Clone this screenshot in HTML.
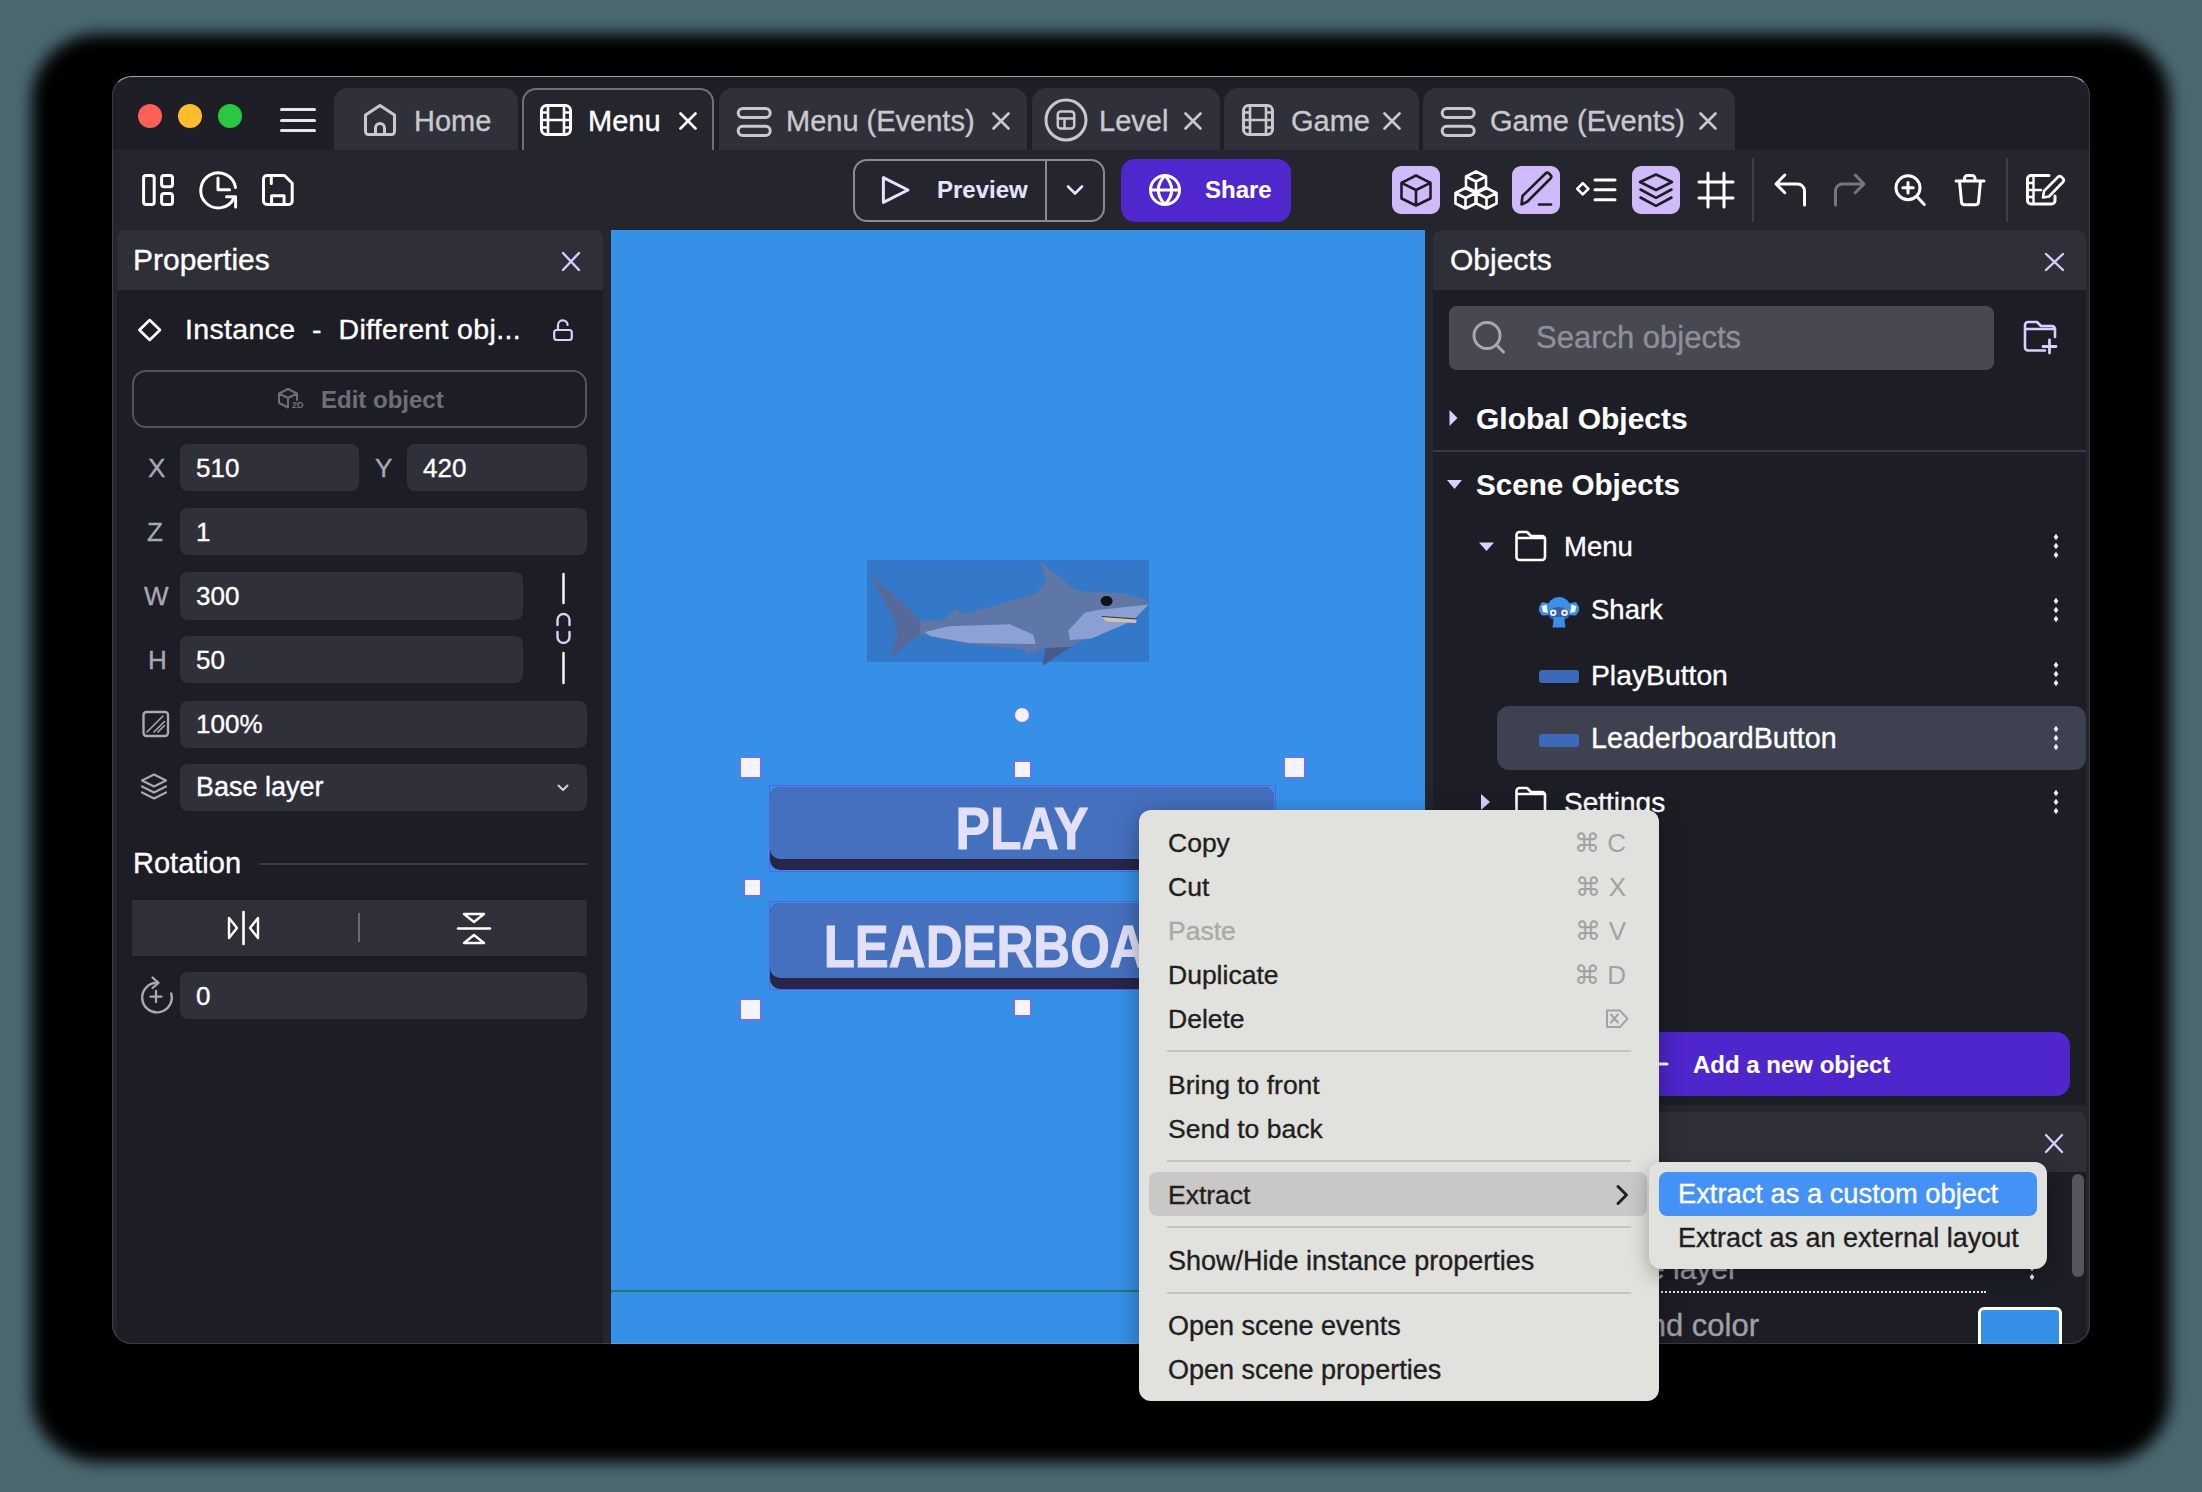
<!DOCTYPE html>
<html><head><meta charset="utf-8"><style>
html,body{margin:0;padding:0;width:2202px;height:1492px;overflow:hidden;background:#4b6870;}
body{position:relative;font-family:"Liberation Sans",sans-serif;}
.a{position:absolute;}
.t{position:absolute;white-space:pre;line-height:1;-webkit-text-stroke:0.35px currentColor;}
#win{position:absolute;left:112px;top:76px;width:1978px;height:1268px;border-radius:20px;overflow:hidden;background:#1e1e27;}
#shadow{position:absolute;left:112px;top:76px;width:1978px;height:1268px;border-radius:20px;box-shadow:0 38px 16px 80px #000;}
#inner{position:absolute;left:-112px;top:-76px;width:2202px;height:1492px;}
#border{position:absolute;left:112px;top:76px;width:1978px;height:1268px;border-radius:20px;box-sizing:border-box;border:1px solid rgba(255,255,255,0.12);border-top-color:rgba(255,255,255,0.6);pointer-events:none;}
</style></head><body>
<div id="shadow"></div>
<div id="win"><div id="inner">
<div class="a" style="left:112px;top:76px;width:1978px;height:74px;background:#1e1e27;border-radius:0px;"></div><div class="a" style="left:138px;top:104px;width:24px;height:24px;background:#fe5f57;border-radius:12px;"></div><div class="a" style="left:178px;top:104px;width:24px;height:24px;background:#febc2e;border-radius:12px;"></div><div class="a" style="left:218px;top:104px;width:24px;height:24px;background:#28c840;border-radius:12px;"></div><div class="a" style="left:280px;top:108px;width:36px;height:3px;background:#e6e6ea;border-radius:1.5px;"></div><div class="a" style="left:280px;top:119px;width:36px;height:3px;background:#e6e6ea;border-radius:1.5px;"></div><div class="a" style="left:280px;top:129px;width:36px;height:3px;background:#e6e6ea;border-radius:1.5px;"></div><div class="a" style="left:334px;top:88px;width:184px;height:62px;background:#30303a;border-radius:14px 14px 0 0;"></div><div class="t" style="left:414px;top:106.5px;font-size:29px;color:#c9c9cc;">Home</div><svg class="a" style="left:360px;top:100px;width:40px;height:40px;" viewBox="360 100 40 40" fill="none"><path d="M365.5 115 L380 105.5 L394.5 115 V131.5 a3 3 0 0 1 -3 3 H368.5 a3 3 0 0 1 -3 -3 Z" stroke="#c9c9cc" stroke-width="3" stroke-linecap="round" stroke-linejoin="round" fill="none" /><path d="M375.5 134.5 V128 a4.5 4.5 0 0 1 9 0 V134.5" stroke="#c9c9cc" stroke-width="3" stroke-linecap="round" stroke-linejoin="round" fill="none" /></svg><div class="a" style="left:522px;top:88px;width:192px;height:64px;background:#25252e;border-radius:14px 14px 0 0;box-sizing:border-box;border:2px solid #6f6f78;border-bottom:none;"></div><div class="t" style="left:588px;top:106.5px;font-size:29px;color:#ffffff;">Menu</div><svg class="a" style="left:679px;top:112px;width:18px;height:18px;" viewBox="0 0 18 18" fill="none"><path d="M1.5 1.5L16.5 16.5M16.5 1.5L1.5 16.5" stroke="#ffffff" stroke-width="2.6" stroke-linecap="round"/></svg><svg class="a" style="left:536px;top:100px;width:40px;height:40px;" viewBox="536 100 40 40" fill="none"><rect x="541.5" y="105.5" width="29" height="29" rx="5" stroke="#ffffff" stroke-width="3" stroke-linecap="round" stroke-linejoin="round" fill="none" /><path d="M548 106V134M564 106V134M542 120H570M542 112.5H548M542 127.5H548M564 112.5H570M564 127.5H570" stroke="#ffffff" stroke-width="2.6" stroke-linecap="round" stroke-linejoin="round" fill="none" /></svg><div class="a" style="left:719px;top:88px;width:308px;height:62px;background:#30303a;border-radius:14px 14px 0 0;"></div><div class="t" style="left:786px;top:106.5px;font-size:29px;color:#c9c9cc;">Menu (Events)</div><svg class="a" style="left:992px;top:112px;width:18px;height:18px;" viewBox="0 0 18 18" fill="none"><path d="M1.5 1.5L16.5 16.5M16.5 1.5L1.5 16.5" stroke="#c9c9cc" stroke-width="2.6" stroke-linecap="round"/></svg><svg class="a" style="left:732px;top:100px;width:44px;height:42px;" viewBox="732 100 44 42" fill="none"><rect x="738.2" y="108.4" width="32" height="9.2" rx="4.6" stroke="#c9c9cc" stroke-width="3" stroke-linecap="round" stroke-linejoin="round" fill="none" /><rect x="738.2" y="126.3" width="32" height="9.1" rx="4.5" stroke="#c9c9cc" stroke-width="3" stroke-linecap="round" stroke-linejoin="round" fill="none" /></svg><div class="a" style="left:1032px;top:88px;width:188px;height:62px;background:#30303a;border-radius:14px 14px 0 0;"></div><div class="t" style="left:1099px;top:106.5px;font-size:29px;color:#c9c9cc;">Level</div><svg class="a" style="left:1184px;top:112px;width:18px;height:18px;" viewBox="0 0 18 18" fill="none"><path d="M1.5 1.5L16.5 16.5M16.5 1.5L1.5 16.5" stroke="#c9c9cc" stroke-width="2.6" stroke-linecap="round"/></svg><svg class="a" style="left:1040px;top:95px;width:52px;height:50px;" viewBox="1040 95 52 50" fill="none"><circle cx="1066" cy="120" r="20" stroke="#c9c9cc" stroke-width="3" stroke-linecap="round" stroke-linejoin="round" fill="none" /><rect x="1057.8" y="111.6" width="16.4" height="16.9" rx="3" stroke="#c9c9cc" stroke-width="2.5" stroke-linecap="round" stroke-linejoin="round" fill="none" /><path d="M1058 118.5H1074M1064.5 118.5V128.5" stroke="#c9c9cc" stroke-width="2.5" stroke-linecap="round" stroke-linejoin="round" fill="none" /></svg><div class="a" style="left:1224px;top:88px;width:195px;height:62px;background:#30303a;border-radius:14px 14px 0 0;"></div><div class="t" style="left:1291px;top:106.5px;font-size:29px;color:#c9c9cc;">Game</div><svg class="a" style="left:1383px;top:112px;width:18px;height:18px;" viewBox="0 0 18 18" fill="none"><path d="M1.5 1.5L16.5 16.5M16.5 1.5L1.5 16.5" stroke="#c9c9cc" stroke-width="2.6" stroke-linecap="round"/></svg><svg class="a" style="left:1238px;top:100px;width:40px;height:40px;" viewBox="1238 100 40 40" fill="none"><rect x="1243.5" y="105.5" width="29" height="29" rx="5" stroke="#c9c9cc" stroke-width="3" stroke-linecap="round" stroke-linejoin="round" fill="none" /><path d="M1250 106V134M1266 106V134M1244 120H1272M1244 112.5H1250M1244 127.5H1250M1266 112.5H1272M1266 127.5H1272" stroke="#c9c9cc" stroke-width="2.6" stroke-linecap="round" stroke-linejoin="round" fill="none" /></svg><div class="a" style="left:1423px;top:88px;width:312px;height:62px;background:#30303a;border-radius:14px 14px 0 0;"></div><div class="t" style="left:1490px;top:106.5px;font-size:29px;color:#c9c9cc;">Game (Events)</div><svg class="a" style="left:1699px;top:112px;width:18px;height:18px;" viewBox="0 0 18 18" fill="none"><path d="M1.5 1.5L16.5 16.5M16.5 1.5L1.5 16.5" stroke="#c9c9cc" stroke-width="2.6" stroke-linecap="round"/></svg><svg class="a" style="left:1436px;top:100px;width:44px;height:42px;" viewBox="1436 100 44 42" fill="none"><rect x="1442.2" y="108.4" width="32" height="9.2" rx="4.6" stroke="#c9c9cc" stroke-width="3" stroke-linecap="round" stroke-linejoin="round" fill="none" /><rect x="1442.2" y="126.3" width="32" height="9.1" rx="4.5" stroke="#c9c9cc" stroke-width="3" stroke-linecap="round" stroke-linejoin="round" fill="none" /></svg><div class="a" style="left:112px;top:150px;width:1978px;height:1194px;background:#25252e;border-radius:0px;"></div><svg class="a" style="left:138px;top:170px;width:40px;height:40px;" viewBox="138 170 40 40" fill="none"><rect x="143.6" y="175.4" width="10.6" height="29" rx="2.5" stroke="#ffffff" stroke-width="3" stroke-linecap="round" stroke-linejoin="round" fill="none" /><rect x="161.6" y="175.4" width="10.9" height="11.3" rx="2.5" stroke="#ffffff" stroke-width="3" stroke-linecap="round" stroke-linejoin="round" fill="none" /><rect x="161.6" y="193.5" width="10.9" height="10.9" rx="2.5" stroke="#ffffff" stroke-width="3" stroke-linecap="round" stroke-linejoin="round" fill="none" /></svg><svg class="a" style="left:195px;top:166px;width:47px;height:46px;" viewBox="195 166 47 46" fill="none"><path d="M235.5 187.5 A17.5 17.5 0 1 0 234 198" stroke="#ffffff" stroke-width="3" stroke-linecap="round" stroke-linejoin="round" fill="none" /><path d="M226.5 196.7H235.6V207M218 178V189.7H229.6" stroke="#ffffff" stroke-width="3" stroke-linecap="round" stroke-linejoin="round" fill="none" /></svg><svg class="a" style="left:258px;top:170px;width:40px;height:40px;" viewBox="258 170 40 40" fill="none"><path d="M263.5 179 a3.5 3.5 0 0 1 3.5 -3.5 H284.5 L292.2 183.2 V201 a3.5 3.5 0 0 1 -3.5 3.5 H267 a3.5 3.5 0 0 1 -3.5 -3.5 Z" stroke="#ffffff" stroke-width="3" stroke-linecap="round" stroke-linejoin="round" fill="none" /><path d="M271.3 176V183.5M271.6 204V195.7H284.1V204" stroke="#ffffff" stroke-width="3" stroke-linecap="round" stroke-linejoin="round" fill="none" /></svg><div class="a" style="left:853px;top:159px;width:252px;height:63px;background:transparent;border-radius:14px;box-sizing:border-box;border:2px solid #8a8a92;"></div><div class="a" style="left:1045px;top:159px;width:2px;height:63px;background:#8a8a92;border-radius:0px;"></div><svg class="a" style="left:878px;top:172px;width:36px;height:36px;" viewBox="878 172 36 36" fill="none"><path d="M883.4 177.6 L908 190 L883.4 202.4 Z" stroke="#e6e2ff" stroke-width="3" stroke-linecap="round" stroke-linejoin="round" fill="none" /></svg><div class="t" style="left:937px;top:178.1px;font-size:24px;color:#e6e2ff;font-weight:700;-webkit-text-stroke:0.1px currentColor;">Preview</div><svg class="a" style="left:1063px;top:182px;width:25px;height:18px;" viewBox="1063 182 25 18" fill="none"><path d="M1068 186.5 L1075 193.5 L1082 186.5" stroke="#e6e2ff" stroke-width="2.6" stroke-linecap="round" stroke-linejoin="round" fill="none" /></svg><div class="a" style="left:1121px;top:159px;width:170px;height:63px;background:#4f27cd;border-radius:14px;"></div><svg class="a" style="left:1145px;top:170px;width:40px;height:40px;" viewBox="1145 170 40 40" fill="none"><circle cx="1165" cy="190" r="14.5" stroke="#ffffff" stroke-width="3" stroke-linecap="round" stroke-linejoin="round" fill="none" /><path d="M1151 190H1179M1165 175.5 Q1151.5 190 1165 204.5 M1165 175.5 Q1178.5 190 1165 204.5" stroke="#ffffff" stroke-width="3" stroke-linecap="round" stroke-linejoin="round" fill="none" /></svg><div class="t" style="left:1205px;top:178.1px;font-size:24px;color:#ffffff;font-weight:700;-webkit-text-stroke:0.1px currentColor;">Share</div><div class="a" style="left:1392px;top:166px;width:48px;height:48px;background:#d0bafc;border-radius:9px;"></div><div class="a" style="left:1512px;top:166px;width:48px;height:48px;background:#d0bafc;border-radius:9px;"></div><div class="a" style="left:1632px;top:166px;width:48px;height:48px;background:#d0bafc;border-radius:9px;"></div><svg class="a" style="left:1396px;top:170px;width:40px;height:40px;" viewBox="1396 170 40 40" fill="none"><path d="M1416 175.5 L1430.5 182.8 V198.5 L1416 205.5 L1401.5 198.5 V182.8 Z M1401.5 182.8 L1416 190 L1430.5 182.8 M1416 190 V205.5" stroke="#1d1d25" stroke-width="2.6" stroke-linecap="round" stroke-linejoin="round" fill="none" /></svg><svg class="a" style="left:1448px;top:164px;width:56px;height:50px;" viewBox="1448 164 56 50" fill="none"><path d="M1476 171.5 L1486 176.5 V187.0 L1476 192.0 L1466 187.0 V176.5 Z M1466 176.5 L1476 181.5 L1486 176.5 M1476 181.5 V192.0 M1465.5 188 L1475.5 193.0 V203.5 L1465.5 208.5 L1455.5 203.5 V193.0 Z M1455.5 193.0 L1465.5 198.0 L1475.5 193.0 M1465.5 198.0 V208.5 M1486.5 188 L1496.5 193.0 V203.5 L1486.5 208.5 L1476.5 203.5 V193.0 Z M1476.5 193.0 L1486.5 198.0 L1496.5 193.0 M1486.5 198.0 V208.5" stroke="#ffffff" stroke-width="2.6" stroke-linecap="round" stroke-linejoin="round" fill="none" /></svg><svg class="a" style="left:1514px;top:168px;width:44px;height:44px;" viewBox="1514 168 44 44" fill="none"><path d="M1521.5 204.5 L1522.5 196 L1545.5 173.5 a2.5 2.5 0 0 1 3.5 0 L1550.5 175 a2.5 2.5 0 0 1 0 3.5 L1527.5 201.5 Z" stroke="#1d1d25" stroke-width="2.6" stroke-linecap="round" stroke-linejoin="round" fill="none" /><path d="M1539 204.5H1551" stroke="#1d1d25" stroke-width="2.6" stroke-linecap="round" stroke-linejoin="round" fill="none" /></svg><svg class="a" style="left:1572px;top:170px;width:48px;height:38px;" viewBox="1572 170 48 38" fill="none"><path d="M1582.8 183.2 L1588.4 188.8 L1582.8 194.4 L1577.2 188.8 Z" stroke="#ffffff" stroke-width="2.6" stroke-linecap="round" stroke-linejoin="round" fill="none" /><path d="M1595 180H1615M1595 189.8H1615M1595 199.8H1615" stroke="#ffffff" stroke-width="3" stroke-linecap="round" stroke-linejoin="round" fill="none" /></svg><svg class="a" style="left:1634px;top:168px;width:44px;height:44px;" viewBox="1634 168 44 44" fill="none"><path d="M1656 174.5 L1672 182 L1656 190 L1640 182 Z" stroke="#1d1d25" stroke-width="2.6" stroke-linecap="round" stroke-linejoin="round" fill="none" /><path d="M1640.5 189.5 L1656 197.8 L1671.5 189.5 M1640.5 197.5 L1656 205.8 L1671.5 197.5" stroke="#1d1d25" stroke-width="2.6" stroke-linecap="round" stroke-linejoin="round" fill="none" /></svg><svg class="a" style="left:1694px;top:168px;width:44px;height:44px;" viewBox="1694 168 44 44" fill="none"><path d="M1708 173V207M1724 173V207M1699 182H1733M1699 198H1733" stroke="#ffffff" stroke-width="3" stroke-linecap="round" stroke-linejoin="round" fill="none" /></svg><div class="a" style="left:1752px;top:158px;width:2px;height:64px;background:#3b3e4b;border-radius:0px;"></div><div class="a" style="left:2006px;top:158px;width:2px;height:64px;background:#3b3e4b;border-radius:0px;"></div><svg class="a" style="left:1770px;top:170px;width:40px;height:40px;" viewBox="1770 170 40 40" fill="none"><path d="M1804.5 205 V191 a7 7 0 0 0 -7 -7 H1776 M1784.8 175 L1776 184 L1784.8 192.7" stroke="#ffffff" stroke-width="3" stroke-linecap="round" stroke-linejoin="round" fill="none" /></svg><svg class="a" style="left:1830px;top:170px;width:40px;height:40px;" viewBox="1830 170 40 40" fill="none"><path d="M1835.5 205 V191 a7 7 0 0 1 7 -7 H1864 M1855.2 175 L1864 184 L1855.2 192.7" stroke="#75757d" stroke-width="3" stroke-linecap="round" stroke-linejoin="round" fill="none" /></svg><svg class="a" style="left:1890px;top:170px;width:40px;height:40px;" viewBox="1890 170 40 40" fill="none"><circle cx="1908" cy="187.7" r="12" stroke="#ffffff" stroke-width="3" stroke-linecap="round" stroke-linejoin="round" fill="none" /><path d="M1917 196.8 L1924.3 204.5 M1908 182.5V193 M1902.8 187.7H1913.2" stroke="#ffffff" stroke-width="3" stroke-linecap="round" stroke-linejoin="round" fill="none" /></svg><svg class="a" style="left:1950px;top:170px;width:40px;height:40px;" viewBox="1950 170 40 40" fill="none"><path d="M1956 181H1984 M1964.5 181 V178.5 a3 3 0 0 1 3 -3 H1972 a3 3 0 0 1 3 3 V181 M1959.5 181 L1961.5 202 a3 3 0 0 0 3 2.7 H1975.5 a3 3 0 0 0 3 -2.7 L1980.5 181" stroke="#ffffff" stroke-width="3" stroke-linecap="round" stroke-linejoin="round" fill="none" /></svg><svg class="a" style="left:2022px;top:170px;width:48px;height:40px;" viewBox="2022 170 48 40" fill="none"><path d="M2049 175.5 H2031 a3.5 3.5 0 0 0 -3.5 3.5 V200.5 a3.5 3.5 0 0 0 3.5 3.5 H2051.5 a3.5 3.5 0 0 0 3.5 -3.5 V196" stroke="#ffffff" stroke-width="3" stroke-linecap="round" stroke-linejoin="round" fill="none" /><path d="M2033.5 176V204 M2028 183H2033.5 M2028 190H2033.5 M2028 197H2033.5 M2033.5 190H2041" stroke="#ffffff" stroke-width="2.4" stroke-linecap="round" stroke-linejoin="round" fill="none" /><path d="M2043 197.5 L2044 191 L2058 177 a2.5 2.5 0 0 1 3.5 0 L2063 178.5 a2.5 2.5 0 0 1 0 3.5 L2049 196.5 Z" stroke="#ffffff" stroke-width="2.6" stroke-linecap="round" stroke-linejoin="round" fill="none" /></svg><div class="a" style="left:117px;top:230px;width:486px;height:1114px;background:#1d1d26;border-radius:8px 8px 0 0;"></div><div class="a" style="left:117px;top:230px;width:486px;height:60px;background:#2f2f38;border-radius:8px 8px 0 0;"></div><div class="t" style="left:133px;top:245.2px;font-size:30px;color:#ffffff;">Properties</div><svg class="a" style="left:559px;top:249px;width:24px;height:25px;" viewBox="559 249 24 25" fill="none"><path d="M563 253L579 270M579 253L563 270" stroke="#d6ccff" stroke-width="2.4" stroke-linecap="round" stroke-linejoin="round" fill="none" /></svg><div class="t" style="left:185px;top:314.9px;font-size:28.5px;color:#ffffff;letter-spacing:0.35px;">Instance  -  Different obj...</div><div class="a" style="left:132px;top:370px;width:455px;height:58px;background:transparent;border-radius:14px;box-sizing:border-box;border:2px solid #4f5363;"></div><div class="t" style="left:321px;top:387.7px;font-size:24px;color:#6e6e7a;font-weight:700;-webkit-text-stroke:0.1px currentColor;">Edit object</div><div class="t" style="left:148px;top:455.0px;font-size:26px;color:#a9a9b1;">X</div><div class="a" style="left:180px;top:444px;width:179px;height:47px;background:#30303a;border-radius:8px;"></div><div class="t" style="left:196px;top:455.0px;font-size:26px;color:#ffffff;">510</div><div class="t" style="left:375px;top:455.0px;font-size:26px;color:#a9a9b1;">Y</div><div class="a" style="left:407px;top:444px;width:180px;height:47px;background:#30303a;border-radius:8px;"></div><div class="t" style="left:423px;top:455.0px;font-size:26px;color:#ffffff;">420</div><div class="t" style="left:147px;top:519.0px;font-size:26px;color:#a9a9b1;">Z</div><div class="a" style="left:180px;top:508px;width:407px;height:47px;background:#30303a;border-radius:8px;"></div><div class="t" style="left:196px;top:519.0px;font-size:26px;color:#ffffff;">1</div><div class="t" style="left:144px;top:583.0px;font-size:26px;color:#a9a9b1;">W</div><div class="a" style="left:180px;top:572px;width:343px;height:48px;background:#30303a;border-radius:8px;"></div><div class="t" style="left:196px;top:583.0px;font-size:26px;color:#ffffff;">300</div><div class="t" style="left:148px;top:647.0px;font-size:26px;color:#a9a9b1;">H</div><div class="a" style="left:180px;top:636px;width:343px;height:47px;background:#30303a;border-radius:8px;"></div><div class="t" style="left:196px;top:647.0px;font-size:26px;color:#ffffff;">50</div><div class="a" style="left:180px;top:701px;width:407px;height:47px;background:#30303a;border-radius:8px;"></div><div class="t" style="left:196px;top:711.0px;font-size:26px;color:#ffffff;">100%</div><div class="a" style="left:180px;top:764px;width:407px;height:47px;background:#30303a;border-radius:8px;"></div><div class="t" style="left:196px;top:774.1px;font-size:27px;color:#ffffff;">Base layer</div><div class="t" style="left:133px;top:848.9px;font-size:29px;color:#ffffff;">Rotation</div><div class="a" style="left:259px;top:863px;width:328px;height:2px;background:#3b3b45;border-radius:0px;"></div><div class="a" style="left:132px;top:900px;width:455px;height:56px;background:#2f2f38;border-radius:2px;"></div><div class="a" style="left:358px;top:913px;width:2px;height:29px;background:#6a6a72;border-radius:0px;"></div><div class="a" style="left:180px;top:972px;width:407px;height:47px;background:#30303a;border-radius:8px;"></div><div class="t" style="left:196px;top:983.0px;font-size:26px;color:#ffffff;">0</div><svg class="a" style="left:134px;top:314px;width:32px;height:32px;" viewBox="134 314 32 32" fill="none"><path d="M149.7 320 L160 330 L149.7 340 L139.4 330 Z" stroke="#ffffff" stroke-width="2.6" stroke-linecap="round" stroke-linejoin="round" fill="none" /></svg><svg class="a" style="left:548px;top:314px;width:30px;height:32px;" viewBox="548 314 30 32" fill="none"><rect x="554.2" y="330" width="17.6" height="10" rx="2.5" stroke="#d8d0ff" stroke-width="2.2" stroke-linecap="round" stroke-linejoin="round" fill="none" /><path d="M558 330 V325.5 a4.8 4.8 0 0 1 9.6 -0.5" stroke="#d8d0ff" stroke-width="2.2" stroke-linecap="round" stroke-linejoin="round" fill="none" /></svg><svg class="a" style="left:274px;top:384px;width:32px;height:30px;" viewBox="274 384 32 30" fill="none"><path d="M288 389 L297 393.5 V400 M279 393.5 V403 L288 407.5 M279 393.5 L288 389 M279 393.5 L288 398 L297 393.5 M288 398 V407.5" stroke="#6e6e7a" stroke-width="2" stroke-linecap="round" stroke-linejoin="round" fill="none" /></svg><div class="t" style="left:292px;top:401.4px;font-size:9px;color:#6e6e7a;font-weight:700;-webkit-text-stroke:0.1px currentColor;">2D</div><svg class="a" style="left:138px;top:706px;width:36px;height:36px;" viewBox="138 706 36 36" fill="none"><rect x="143.5" y="712" width="24.5" height="24" rx="3" stroke="#a9a9b1" stroke-width="2.4" stroke-linecap="round" stroke-linejoin="round" fill="none" /><path d="M147 732 L163 716 M154 732 L164.5 721.5 M158 732 L164.5 725.5" stroke="#a9a9b1" stroke-width="1.6" stroke-linecap="round" stroke-linejoin="round" fill="none" /></svg><svg class="a" style="left:136px;top:770px;width:36px;height:36px;" viewBox="136 770 36 36" fill="none"><path d="M154 774.5 L166 780.5 L154 786.5 L142 780.5 Z" stroke="#a9a9b1" stroke-width="2.2" stroke-linecap="round" stroke-linejoin="round" fill="none" /><path d="M142 786.5 L154 792.5 L166 786.5 M142 792.5 L154 798.5 L166 792.5" stroke="#a9a9b1" stroke-width="2.2" stroke-linecap="round" stroke-linejoin="round" fill="none" /></svg><svg class="a" style="left:554px;top:780px;width:18px;height:16px;" viewBox="554 780 18 16" fill="none"><path d="M558.5 785.5 L563 790 L567.5 785.5" stroke="#d0d0d8" stroke-width="2" stroke-linecap="round" stroke-linejoin="round" fill="none" /></svg><svg class="a" style="left:550px;top:568px;width:28px;height:122px;" viewBox="550 568 28 122" fill="none"><path d="M563.5 574V603 M563.5 653V683" stroke="#ffffff" stroke-width="2.4" stroke-linecap="round" stroke-linejoin="round" fill="none" /><path d="M557.5 625 V620 a6 6 0 0 1 12 0 V625 M557.5 632 V637 a6 6 0 0 0 12 0 V632" stroke="#d8d0ff" stroke-width="2.4" stroke-linecap="round" stroke-linejoin="round" fill="none" /></svg><svg class="a" style="left:222px;top:906px;width:44px;height:44px;" viewBox="222 906 44 44" fill="none"><path d="M243.5 912 V944" stroke="#ffffff" stroke-width="2.6" stroke-linecap="round" stroke-linejoin="round" fill="none" /><path d="M229 918 L237 928 L229 938 Z M258 918 L250 928 L258 938 Z" stroke="#ffffff" stroke-width="2.4" stroke-linecap="round" stroke-linejoin="round" fill="none" /></svg><svg class="a" style="left:452px;top:906px;width:44px;height:44px;" viewBox="452 906 44 44" fill="none"><path d="M458 928.5 H490" stroke="#ffffff" stroke-width="2.6" stroke-linecap="round" stroke-linejoin="round" fill="none" /><path d="M464 914 L484 914 L474 922 Z M464 943 L484 943 L474 935 Z" stroke="#ffffff" stroke-width="2.4" stroke-linecap="round" stroke-linejoin="round" fill="none" /></svg><svg class="a" style="left:134px;top:970px;width:46px;height:50px;" viewBox="134 970 46 50" fill="none"><path d="M171.2 993.5 A14.8 14.8 0 1 1 157.5 982.8" stroke="#a9a9b1" stroke-width="2.4" stroke-linecap="round" stroke-linejoin="round" fill="none" /><path d="M152.5 977.5 L158.5 982.8 L152.5 988 M156 991 V1002 M150.5 996.6 H161.5" stroke="#a9a9b1" stroke-width="2.3" stroke-linecap="round" stroke-linejoin="round" fill="none" /></svg><div class="a" style="left:611px;top:230px;width:814px;height:1114px;background:#3790e8;border-radius:0px;"></div><div class="a" style="left:611px;top:1290px;width:814px;height:2px;background:#22796f;border-radius:0px;"></div><div class="a" style="left:867px;top:560px;width:282px;height:102px;background:#3479c9;border-radius:0px;"></div><svg class="a" style="left:862px;top:555px;width:298px;height:117px;" viewBox="862 555 298 117" fill="none"><polygon points="868.9,573.8 894,595 920.6,620.5 941.7,620.8 956.7,608.6 962.2,614 989.4,607.2 1035.7,593.6 1046.6,581.3 1039.8,560.9 1072.5,588 1078,590.9 1125.7,593.6 1150.9,601.8 1132.5,618 1091.6,634.5 1071.2,646.7 1042.6,665.8 1045.3,648 1024.9,654.9 1026.2,649.5 969,644 920,634.5 890,657.6 896.8,637.2 894.7,619.5" fill="#5f77a6"/><polygon points="868.9,573.8 894,595 920.6,620.5 920,634.5 890,657.6 896.8,637.2 894.7,619.5" fill="#56699a"/><polygon points="925,632 948.6,626.3 1009.9,624.3 1033,634.5 1035.7,644 969,643 930,636" fill="#8da2d4"/><polygon points="1068.4,630.4 1084.8,612.7 1098.4,610 1148.8,604.5 1132.5,620.8 1091.6,638.6 1070,640" fill="#8ba0d2"/><polygon points="1045.3,648 1071.2,646.7 1042.6,665.8" fill="#485a8c"/><ellipse cx="1106.6" cy="601.1" rx="6" ry="5" fill="#111318"/><polygon points="1102,616.5 1137,619 1136,623 1106,621.5" fill="#c9c3bd"/><path d="M1102 616.5 L1137 619" stroke="#333" stroke-width="1.2"/></svg><div class="a" style="left:1015px;top:708px;width:14px;height:14px;background:#f0f0ff;border-radius:7px;box-shadow:0 0 0 1px #7a6cf0;"></div><div class="a" style="left:741px;top:758px;width:19px;height:19px;background:#f4f4ff;border-radius:0px;box-shadow:0 0 0 1.5px #7a6cf0;"></div><div class="a" style="left:1015px;top:762px;width:15px;height:15px;background:#f4f4ff;border-radius:0px;box-shadow:0 0 0 1.5px #7a6cf0;"></div><div class="a" style="left:1285px;top:758px;width:19px;height:19px;background:#f4f4ff;border-radius:0px;box-shadow:0 0 0 1.5px #7a6cf0;"></div><div class="a" style="left:745px;top:880px;width:15px;height:15px;background:#f4f4ff;border-radius:0px;box-shadow:0 0 0 1.5px #7a6cf0;"></div><div class="a" style="left:741px;top:1000px;width:19px;height:19px;background:#f4f4ff;border-radius:0px;box-shadow:0 0 0 1.5px #7a6cf0;"></div><div class="a" style="left:1015px;top:1000px;width:15px;height:15px;background:#f4f4ff;border-radius:0px;box-shadow:0 0 0 1.5px #7a6cf0;"></div><div class="a" style="left:770px;top:787px;width:504px;height:83px;background:#26254a;border-radius:10px;"></div><div class="a" style="left:770px;top:787px;width:504px;height:72px;background:#4570be;border-radius:10px;"></div><div class="t" style="left:522px;width:1000px;text-align:center;top:798.6px;font-size:60px;color:#e2e0f8;font-weight:700;-webkit-text-stroke:1px currentColor;transform:scaleX(0.86);transform-origin:50% 50%;">PLAY</div><div class="a" style="left:770px;top:903px;width:504px;height:86px;background:#26254a;border-radius:10px;"></div><div class="a" style="left:770px;top:903px;width:504px;height:75px;background:#4570be;border-radius:10px;"></div><div class="t" style="left:522px;width:1000px;text-align:center;top:917.2px;font-size:60px;color:#e2e0f8;font-weight:700;-webkit-text-stroke:1px currentColor;transform:scaleX(0.85);transform-origin:50% 50%;">LEADERBOARD</div><div class="a" style="left:769px;top:785px;width:507px;height:87px;background:transparent;border-radius:0px;box-sizing:border-box;border:1.5px solid rgba(98,88,226,0.85);"></div><div class="a" style="left:769px;top:901px;width:507px;height:89px;background:transparent;border-radius:0px;box-sizing:border-box;border:1.5px solid rgba(98,88,226,0.85);"></div><div class="a" style="left:1433px;top:230px;width:653px;height:875px;background:#1d1d26;border-radius:8px 8px 0 0;"></div><div class="a" style="left:1433px;top:230px;width:653px;height:60px;background:#2f2f38;border-radius:8px 8px 0 0;"></div><div class="t" style="left:1450px;top:245.3px;font-size:30px;color:#ffffff;">Objects</div><svg class="a" style="left:2042px;top:250px;width:25px;height:24px;" viewBox="2042 250 25 24" fill="none"><path d="M2046 254L2063 270M2063 254L2046 270" stroke="#d6ccff" stroke-width="2.4" stroke-linecap="round" stroke-linejoin="round" fill="none" /></svg><div class="a" style="left:1449px;top:306px;width:545px;height:64px;background:#484852;border-radius:8px;"></div><div class="t" style="left:1536px;top:322.3px;font-size:31px;color:#8f8f97;">Search objects</div><div class="t" style="left:1476px;top:403.6px;font-size:30px;color:#ffffff;font-weight:700;-webkit-text-stroke:0.1px currentColor;">Global Objects</div><div class="a" style="left:1433px;top:450px;width:653px;height:2px;background:#363947;border-radius:0px;"></div><div class="t" style="left:1476px;top:469.9px;font-size:29.6px;color:#ffffff;font-weight:700;-webkit-text-stroke:0.1px currentColor;">Scene Objects</div><div class="a" style="left:1497px;top:706px;width:589px;height:64px;background:#3d4150;border-radius:12px;"></div><div class="t" style="left:1564px;top:533.0px;font-size:27.5px;color:#ffffff;">Menu</div><div class="t" style="left:1591px;top:596.3px;font-size:27.5px;color:#ffffff;">Shark</div><div class="t" style="left:1591px;top:660.5px;font-size:28.3px;color:#ffffff;">PlayButton</div><div class="t" style="left:1591px;top:723.7px;font-size:28.7px;color:#ffffff;">LeaderboardButton</div><div class="t" style="left:1564px;top:789.3px;font-size:28px;color:#ffffff;">Settings</div><div class="a" style="left:1449px;top:1032px;width:621px;height:64px;background:#4f25cc;border-radius:14px;"></div><svg class="a" style="left:1440px;top:396px;width:30px;height:44px;" viewBox="1440 396 30 44" fill="none"><path d="M1449.5 410 L1457.5 418 L1449.5 426 Z" fill="#d8d0ff"/></svg><svg class="a" style="left:1440px;top:470px;width:30px;height:30px;" viewBox="1440 470 30 30" fill="none"><path d="M1447 480 L1462 480 L1454.5 489 Z" fill="#d8d0ff"/></svg><svg class="a" style="left:1470px;top:532px;width:30px;height:28px;" viewBox="1470 532 30 28" fill="none"><path d="M1479 542.5 L1494 542.5 L1486.5 551 Z" fill="#d8d0ff"/></svg><svg class="a" style="left:1470px;top:785px;width:30px;height:35px;" viewBox="1470 785 30 35" fill="none"><path d="M1481 794 L1490 802 L1481 810 Z" fill="#d8d0ff"/></svg><svg class="a" style="left:1510px;top:526px;width:42px;height:40px;" viewBox="1510 526 42 40" fill="none"><path d="M1516.5 535 a3 3 0 0 1 3 -3 H1527 L1531 536 H1542 a3 3 0 0 1 3 3 V557 a3 3 0 0 1 -3 3 H1519.5 a3 3 0 0 1 -3 -3 Z M1516.5 538 H1545" stroke="#ffffff" stroke-width="2.6" stroke-linecap="round" stroke-linejoin="round" fill="none" /></svg><svg class="a" style="left:1510px;top:782px;width:42px;height:40px;" viewBox="1510 782 42 40" fill="none"><path d="M1516.5 791 a3 3 0 0 1 3 -3 H1527 L1531 792 H1542 a3 3 0 0 1 3 3 V813 a3 3 0 0 1 -3 3 H1519.5 a3 3 0 0 1 -3 -3 Z M1516.5 794 H1545" stroke="#ffffff" stroke-width="2.6" stroke-linecap="round" stroke-linejoin="round" fill="none" /></svg><svg class="a" style="left:2046px;top:530px;width:20px;height:32px;" viewBox="2046 530 20 32" fill="none"><path d="M2056 533.8 L2058.4 537 L2056 540.2 L2053.6 537 Z" fill="#ece8ff"/><path d="M2056 542.8 L2058.4 546 L2056 549.2 L2053.6 546 Z" fill="#ece8ff"/><path d="M2056 551.8 L2058.4 555 L2056 558.2 L2053.6 555 Z" fill="#ece8ff"/></svg><svg class="a" style="left:2046px;top:594px;width:20px;height:32px;" viewBox="2046 594 20 32" fill="none"><path d="M2056 597.8 L2058.4 601 L2056 604.2 L2053.6 601 Z" fill="#ece8ff"/><path d="M2056 606.8 L2058.4 610 L2056 613.2 L2053.6 610 Z" fill="#ece8ff"/><path d="M2056 615.8 L2058.4 619 L2056 622.2 L2053.6 619 Z" fill="#ece8ff"/></svg><svg class="a" style="left:2046px;top:658px;width:20px;height:32px;" viewBox="2046 658 20 32" fill="none"><path d="M2056 661.8 L2058.4 665 L2056 668.2 L2053.6 665 Z" fill="#ece8ff"/><path d="M2056 670.8 L2058.4 674 L2056 677.2 L2053.6 674 Z" fill="#ece8ff"/><path d="M2056 679.8 L2058.4 683 L2056 686.2 L2053.6 683 Z" fill="#ece8ff"/></svg><svg class="a" style="left:2046px;top:722px;width:20px;height:32px;" viewBox="2046 722 20 32" fill="none"><path d="M2056 725.8 L2058.4 729 L2056 732.2 L2053.6 729 Z" fill="#ece8ff"/><path d="M2056 734.8 L2058.4 738 L2056 741.2 L2053.6 738 Z" fill="#ece8ff"/><path d="M2056 743.8 L2058.4 747 L2056 750.2 L2053.6 747 Z" fill="#ece8ff"/></svg><svg class="a" style="left:2046px;top:786px;width:20px;height:32px;" viewBox="2046 786 20 32" fill="none"><path d="M2056 789.8 L2058.4 793 L2056 796.2 L2053.6 793 Z" fill="#ece8ff"/><path d="M2056 798.8 L2058.4 802 L2056 805.2 L2053.6 802 Z" fill="#ece8ff"/><path d="M2056 807.8 L2058.4 811 L2056 814.2 L2053.6 811 Z" fill="#ece8ff"/></svg><svg class="a" style="left:1534px;top:592px;width:50px;height:40px;" viewBox="1534 592 50 40" fill="none"><polygon points="1539,607 1542,602 1549,603.5 1551,615 1542,615.5 1539,611" fill="#3a8fe6"/><polygon points="1579,607 1576,602 1569,603.5 1567,615 1576,615.5 1579,611" fill="#3a8fe6"/><polygon points="1541.5,606 1546.5,604.5 1548,613 1543,612" fill="#f4f4ff"/><polygon points="1576.5,606 1571.5,604.5 1570,613 1575,612" fill="#f4f4ff"/><circle cx="1559" cy="608.5" r="11.5" fill="#3a8fe6"/><ellipse cx="1559" cy="614" rx="10.5" ry="7" fill="#3d5ba8"/><circle cx="1553.2" cy="612.8" r="3.3" fill="#f4f4ff"/><circle cx="1564.6" cy="612.8" r="3.3" fill="#f4f4ff"/><circle cx="1553.2" cy="612.8" r="1.4" fill="#3d5ba8"/><circle cx="1564.6" cy="612.8" r="1.4" fill="#3d5ba8"/><polygon points="1554,617 1564,617 1565.5,627.5 1552.5,627.5" fill="#3a8fe6"/></svg><div class="a" style="left:1539px;top:670px;width:40px;height:13px;background:#3d6ab8;border-radius:3px;"></div><div class="a" style="left:1539px;top:734px;width:40px;height:13px;background:#3d6ab8;border-radius:3px;"></div><svg class="a" style="left:1468px;top:316px;width:42px;height:40px;" viewBox="1468 316 42 40" fill="none"><circle cx="1487" cy="335.5" r="13" stroke="#a8a8b0" stroke-width="3" stroke-linecap="round" stroke-linejoin="round" fill="none" /><path d="M1496.5 345 L1503.5 352" stroke="#a8a8b0" stroke-width="3" stroke-linecap="round" stroke-linejoin="round" fill="none" /></svg><svg class="a" style="left:2020px;top:316px;width:42px;height:42px;" viewBox="2020 316 42 42" fill="none"><path d="M2045 350.5 H2028 a3 3 0 0 1 -3 -3 V325 a3 3 0 0 1 3 -3 H2037 L2041 326 H2052 a3 3 0 0 1 3 3 V337 M2025 329 H2055" stroke="#d8d0ff" stroke-width="2.6" stroke-linecap="round" stroke-linejoin="round" fill="none" /><path d="M2049.5 340 V353 M2043 346.5 H2056" stroke="#d8d0ff" stroke-width="2.8" stroke-linecap="round" stroke-linejoin="round" fill="none" /></svg><svg class="a" style="left:1640px;top:1052px;width:35px;height:24px;" viewBox="1640 1052 35 24" fill="none"><path d="M1646 1064 H1667 M1655.5 1057 V1071" stroke="#ffffff" stroke-width="3" stroke-linecap="round" stroke-linejoin="round" fill="none" /></svg><div class="t" style="left:1693px;top:1052.7px;font-size:24px;color:#ffffff;font-weight:700;-webkit-text-stroke:0.1px currentColor;">Add a new object</div><div class="a" style="left:1433px;top:1112px;width:653px;height:232px;background:#1d1d26;border-radius:8px 8px 0 0;"></div><div class="a" style="left:1433px;top:1112px;width:653px;height:60px;background:#2f2f38;border-radius:8px 8px 0 0;"></div><svg class="a" style="left:2042px;top:1131px;width:24px;height:25px;" viewBox="2042 1131 24 25" fill="none"><path d="M2046 1135L2062 1152M2062 1135L2046 1152" stroke="#d6ccff" stroke-width="2.4" stroke-linecap="round" stroke-linejoin="round" fill="none" /></svg><div class="a" style="left:2072px;top:1174px;width:12px;height:103px;background:#55555d;border-radius:6px;"></div><div class="t" style="left:1138px;width:600px;text-align:right;top:1253.6px;font-size:30px;color:#a0a0a8;">Base layer</div><svg class="a" style="left:2024px;top:1258px;width:16px;height:32px;" viewBox="2024 1258 16 32" fill="none"><path d="M2032 1264.8 L2034.4 1268 L2032 1271.2 L2029.6 1268 Z" fill="#ece8ff"/><path d="M2032 1273.8 L2034.4 1277 L2032 1280.2 L2029.6 1277 Z" fill="#ece8ff"/></svg><div class="a" style="left:1450px;top:1291px;width:536px;height:0;border-top:2px dotted #e8e8ee;"></div><div class="t" style="left:1159px;width:600px;text-align:right;top:1309.8px;font-size:31px;color:#a0a0a8;">Background color</div><div class="a" style="left:1978px;top:1307px;width:84px;height:43px;background:#3790e8;border-radius:6px;box-sizing:border-box;border:3px solid #ffffff;"></div>
</div></div>
<div id="border"></div>
<div class="a" style="left:1139px;top:810px;width:520px;height:591px;background:#e1e1dd;border-radius:12px;box-shadow:0 6px 24px rgba(0,0,0,0.35);"></div><div class="t" style="left:1168px;top:829.6px;font-size:26.5px;color:#1f1f1f;">Copy</div><div class="t" style="left:1026px;width:600px;text-align:right;top:830.0px;font-size:26px;color:#a2a2a2;-webkit-text-stroke:0;">⌘ C</div><div class="t" style="left:1168px;top:873.6px;font-size:26.5px;color:#1f1f1f;">Cut</div><div class="t" style="left:1026px;width:600px;text-align:right;top:874.0px;font-size:26px;color:#a2a2a2;-webkit-text-stroke:0;">⌘ X</div><div class="t" style="left:1168px;top:917.6px;font-size:26.5px;color:#a9a9a9;">Paste</div><div class="t" style="left:1026px;width:600px;text-align:right;top:918.0px;font-size:26px;color:#a2a2a2;-webkit-text-stroke:0;">⌘ V</div><div class="t" style="left:1168px;top:961.6px;font-size:26.5px;color:#1f1f1f;">Duplicate</div><div class="t" style="left:1026px;width:600px;text-align:right;top:962.0px;font-size:26px;color:#a2a2a2;-webkit-text-stroke:0;">⌘ D</div><div class="t" style="left:1168px;top:1005.6px;font-size:26.5px;color:#1f1f1f;">Delete</div><div class="a" style="left:1167px;top:1050px;width:464px;height:2px;background:#c4c4c1;border-radius:0px;"></div><div class="t" style="left:1168px;top:1071.6px;font-size:26.5px;color:#1f1f1f;">Bring to front</div><div class="t" style="left:1168px;top:1115.6px;font-size:26.5px;color:#1f1f1f;">Send to back</div><div class="a" style="left:1167px;top:1160px;width:464px;height:2px;background:#c4c4c1;border-radius:0px;"></div><div class="a" style="left:1149px;top:1172px;width:498px;height:44px;background:#c9c8c6;border-radius:8px;"></div><div class="t" style="left:1168px;top:1181.6px;font-size:26.5px;color:#1f1f1f;">Extract</div><div class="a" style="left:1167px;top:1226px;width:464px;height:2px;background:#c4c4c1;border-radius:0px;"></div><div class="t" style="left:1168px;top:1247.5px;font-size:27px;color:#1f1f1f;">Show/Hide instance properties</div><div class="a" style="left:1167px;top:1292px;width:464px;height:2px;background:#c4c4c1;border-radius:0px;"></div><div class="t" style="left:1168px;top:1313.1px;font-size:27px;color:#1f1f1f;">Open scene events</div><div class="t" style="left:1168px;top:1357.1px;font-size:27px;color:#1f1f1f;">Open scene properties</div><svg class="a" style="left:1600px;top:1004px;width:34px;height:30px;" viewBox="1600 1004 34 30" fill="none"><path d="M1607 1010.5 H1620 L1627.5 1018.7 L1620 1027 H1607 Z M1611 1014.5 L1618 1022.5 M1618 1014.5 L1611 1022.5" stroke="#a3a3a3" stroke-width="2" stroke-linecap="round" stroke-linejoin="round" fill="none" /></svg><svg class="a" style="left:1610px;top:1180px;width:24px;height:30px;" viewBox="1610 1180 24 30" fill="none"><path d="M1618 1186.5 L1626.5 1195 L1618 1203.5" stroke="#222" stroke-width="3" stroke-linecap="round" stroke-linejoin="round" fill="none" /></svg><div class="a" style="left:1649px;top:1162px;width:398px;height:107px;background:#e1e1dd;border-radius:12px;box-shadow:0 6px 20px rgba(0,0,0,0.3);"></div><div class="a" style="left:1659px;top:1172px;width:378px;height:44px;background:#4592f7;border-radius:8px;"></div><div class="t" style="left:1678px;top:1180.3px;font-size:27.3px;color:#ffffff;">Extract as a custom object</div><div class="t" style="left:1678px;top:1225.1px;font-size:27px;color:#1f1f1f;">Extract as an external layout</div>
</body></html>
